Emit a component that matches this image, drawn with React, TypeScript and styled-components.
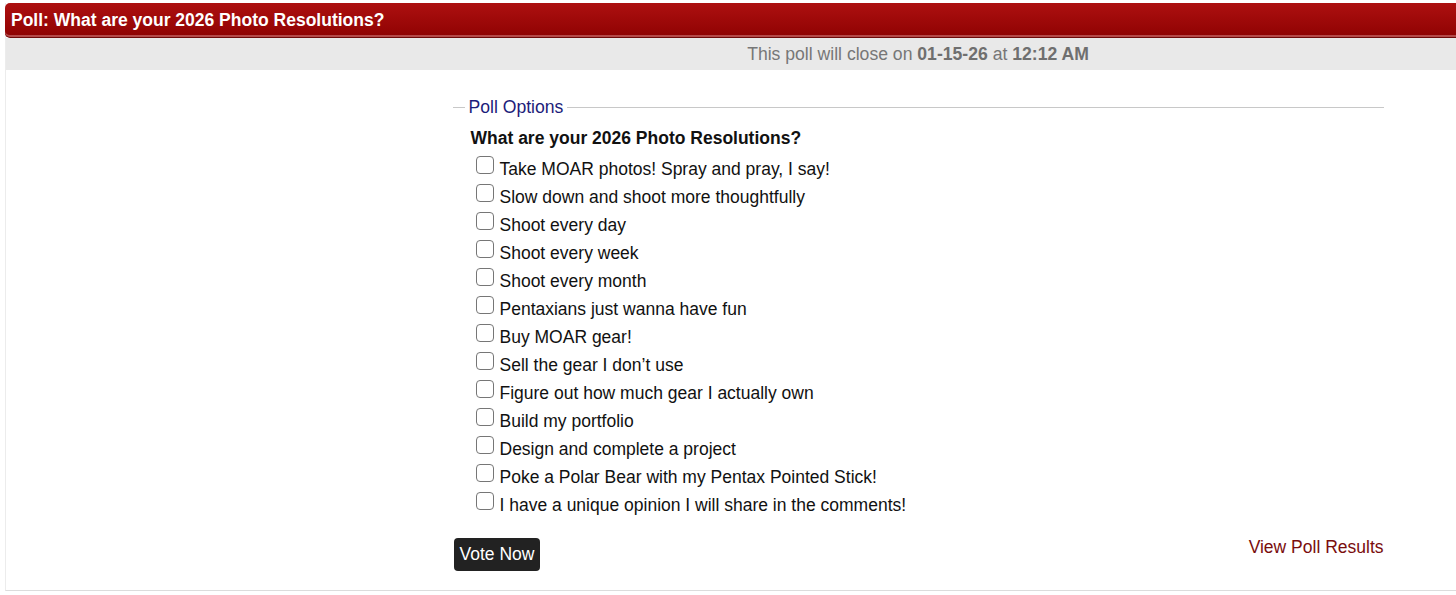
import styled, { createGlobalStyle } from 'styled-components';

const options = [
  'Take MOAR photos! Spray and pray, I say!',
  'Slow down and shoot more thoughtfully',
  'Shoot every day',
  'Shoot every week',
  'Shoot every month',
  'Pentaxians just wanna have fun',
  'Buy MOAR gear!',
  'Sell the gear I don\u2019t use',
  'Figure out how much gear I actually own',
  'Build my portfolio',
  'Design and complete a project',
  'Poke a Polar Bear with my Pentax Pointed Stick!',
  'I have a unique opinion I will share in the comments!',
];

export default function App() {
  return (
    <>
      <GlobalStyle />
      <Page>
        <Panel>
          <TitleBar>Poll: What are your 2026 Photo Resolutions?</TitleBar>
          <CloseBar>
            This poll will close on <b>01-15-26</b> at <b>12:12 AM</b>
          </CloseBar>
          <Body>
            <Options>
              <Legend>Poll Options</Legend>
              <Question>What are your 2026 Photo Resolutions?</Question>
              <OptionList>
                {options.map((text) => (
                  <OptionRow key={text}>
                    <CheckBox type="checkbox" />
                    <span>{text}</span>
                  </OptionRow>
                ))}
              </OptionList>
            </Options>
            <Footer>
              <VoteButton type="button">Vote Now</VoteButton>
              <ResultsLink href="#">View Poll Results</ResultsLink>
            </Footer>
          </Body>
        </Panel>
      </Page>
    </>
  );
}

const GlobalStyle = createGlobalStyle`
  html, body {
    margin: 0;
    padding: 0;
    background: #ffffff;
    overflow: hidden;
  }
  body {
    font-family: "Liberation Sans", Arial, sans-serif;
  }
`;

const Page = styled.div`
  width: 1456px;
  height: 595px;
  padding: 3px 0 0 5px;
  box-sizing: border-box;
  overflow: hidden;
`;

const Panel = styled.div`
  width: 1824px;
  border-left: 1px solid #ececec;
  border-bottom: 1px solid #dcdcdc;
`;

const TitleBar = styled.div`
  height: 35px;
  box-sizing: border-box;
  margin-left: -1px;
  padding: 7px 0 0 6px;
  border-radius: 5px 0 0 5px;
  background: linear-gradient(#ad1010, #950505 80%, #8c0303);
  border-bottom: 1px solid #6e0a0a;
  box-shadow: inset 0 -2px 0 #b44a4a;
  color: #ffffff;
  font-size: 17.5px;
  font-weight: bold;
  line-height: 20px;
`;

const CloseBar = styled.div`
  height: 32px;
  box-sizing: border-box;
  background: #e9e9e9;
  color: #777777;
  font-size: 17.6px;
  line-height: 32px;
  text-align: center;
  b {
    color: #6f6f6f;
  }
`;

const Body = styled.div`
  width: 931px;
  margin: 0 auto;
  padding: 27px 0 19px;
`;

const Options = styled.fieldset`
  margin: 0;
  padding: 0 0 0 18px;
  border: none;
  border-top: 1px solid #c8c8c8;
`;

const Legend = styled.legend`
  margin-left: -6px;
  padding: 0 4px;
  color: #1c1c7a;
  font-size: 17.6px;
  line-height: 20px;
`;

const Question = styled.div`
  margin-top: 11px;
  font-size: 17.5px;
  font-weight: bold;
  line-height: 20px;
  color: #111111;
`;

const OptionList = styled.div`
  margin-top: 7px;
  display: flex;
  flex-direction: column;
`;

const OptionRow = styled.label`
  display: flex;
  align-items: flex-start;
  gap: 6px;
  height: 28px;
  padding-left: 5px;
  font-size: 17.5px;
  line-height: 28px;
  color: #111111;
`;

const CheckBox = styled.input`
  appearance: none;
  width: 18px;
  height: 18px;
  margin: 1px 0 0;
  box-sizing: border-box;
  border: 1.5px solid #767676;
  border-radius: 4px;
  background: #ffffff;
  flex-shrink: 0;
`;

const Footer = styled.div`
  display: flex;
  justify-content: space-between;
  align-items: flex-start;
  margin-top: 19px;
`;

const VoteButton = styled.button`
  margin-left: 1px;
  height: 33px;
  padding: 0 6px;
  border: none;
  border-radius: 4px;
  background: #222222;
  color: #ffffff;
  font-family: "Liberation Sans", Arial, sans-serif;
  font-size: 17.5px;
  line-height: 33px;
`;

const ResultsLink = styled.a`
  margin-top: 0;
  color: #7a0d0d;
  font-size: 17.5px;
  line-height: 18px;
  text-decoration: none;
`;
